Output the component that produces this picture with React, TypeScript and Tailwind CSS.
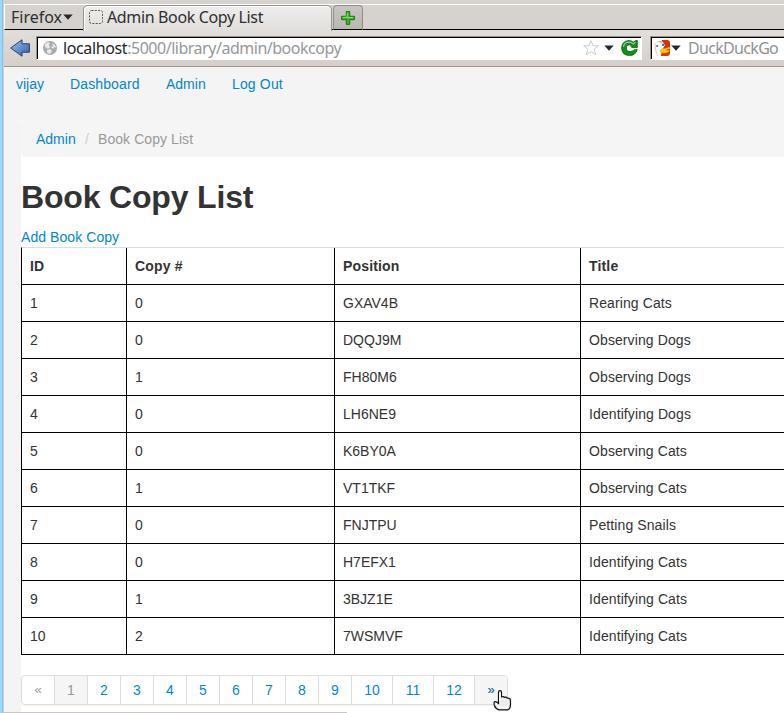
import React from "react";

const rows = [
  ["1", "0", "GXAV4B", "Rearing Cats"],
  ["2", "0", "DQQJ9M", "Observing Dogs"],
  ["3", "1", "FH80M6", "Observing Dogs"],
  ["4", "0", "LH6NE9", "Identifying Dogs"],
  ["5", "0", "K6BY0A", "Observing Cats"],
  ["6", "1", "VT1TKF", "Observing Cats"],
  ["7", "0", "FNJTPU", "Petting Snails"],
  ["8", "0", "H7EFX1", "Identifying Cats"],
  ["9", "1", "3BJZ1E", "Identifying Cats"],
  ["10", "2", "7WSMVF", "Identifying Cats"],
];

const pages = ["2", "3", "4", "5", "6", "7", "8", "9", "10", "11", "12"];

function Caret() {
  return (
    <svg width="10" height="6" viewBox="0 0 10 6" className="block shrink-0">
      <path d="M0.3 0.5h9.4L5 5.7z" fill="#2b2728" />
    </svg>
  );
}

function TabStrip() {
  return (
    <div className="flex h-[26px] border-t border-white bg-[#d6d2ce] text-[16px] leading-[20px] text-[#2f2f2f]">
      <button className="flex h-[25px] w-[79px] items-center border-b border-l border-b-black border-l-white bg-[#d6d2ce] pl-[5px]">
        <span className="w-[53px] whitespace-nowrap">Firefox</span>
        <Caret />
      </button>
      <div className="flex h-[26px] w-[249px] items-center rounded-t-[5px] border border-b-0 border-[#98938f] bg-gradient-to-b from-[#efeeed] to-[#e1dedb] pb-[3px] pl-[5px] shadow-[inset_1px_1px_0_#fff]">
        <svg width="14" height="14" viewBox="0 0 14 14" className="shrink-0">
          <rect x="0.5" y="0.5" width="13" height="13" rx="2" fill="none" stroke="#555" strokeDasharray="2 1.3" />
        </svg>
        <span className="ml-1 whitespace-nowrap pb-px tracking-[-0.36px]">Admin Book Copy List</span>
      </div>
      <div className="h-[25px] w-px border-b border-black" />
      <button className="flex h-[25px] w-[30px] items-center justify-center rounded-t-[4px] border border-b-black border-[#918c88] bg-gradient-to-b from-[#c9c5c2] to-[#bab6b2]">
        <svg width="14" height="14" viewBox="0 0 14 14">
          <path d="M5.3 .6h3.4V5.3h4.7v3.4H8.7v4.7H5.3V8.7H.6V5.3h4.7z" fill="#40b51f" stroke="#15780a" strokeLinejoin="round" />
          <path d="M6.3 2v4.3H2M7 6.5h5" fill="none" stroke="#8be66b" />
        </svg>
      </button>
      <div className="h-[25px] flex-1 border-b border-black" />
    </div>
  );
}

function Toolbar() {
  return (
    <div className="flex h-[37px] items-center border-b border-[#a29290] bg-gradient-to-b from-[#e1dedb] to-[#d4cfcb] pl-[6px] text-[16px]">
      <svg width="20" height="18" viewBox="0 0 20 18" className="mr-[6px] shrink-0">
        <defs>
          <linearGradient id="arrow" x1="0" y1="0" x2="1" y2="1">
            <stop offset="0" stopColor="#a4c5f0" />
            <stop offset="1" stopColor="#2b5da9" />
          </linearGradient>
        </defs>
        <path d="M.7 9L12 .8v4h7.4v8.4H12v4z" fill="url(#arrow)" stroke="#263f6c" strokeLinejoin="round" />
      </svg>
      <div className="flex h-[24px] w-[606px] shrink-0 items-center border border-b-white border-l-[#98918d] border-r-white border-t-[#98918d] bg-white pl-[6px] pr-[3px] shadow-[inset_1px_1px_0_#000]">
        <svg width="14" height="14" viewBox="0 0 14 14" className="shrink-0">
          <circle cx="7" cy="7" r="7" fill="#aaa" />
          <path d="M2 3l3-2 2 1-1 2 1 2-2 2-3-2zM9 2l3 2 1 3-2-1-1 2-2-2 2-1zM4 9l3-1 2 2-2 3-3-1z" fill="#e7e7e7" />
        </svg>
        <span className="ml-[6px] whitespace-nowrap tracking-[-0.48px] text-[#979797]">
          <span className="text-[#252525] tracking-[-0.38px]">localhost</span>:5000/library/admin/bookcopy
        </span>
        <div className="ml-auto flex items-center">
          <svg width="16" height="16" viewBox="0 0 16 16">
            <path d="M8 .8l2.1 5h5.2l-4.1 3.4 1.5 5.4L8 11.6l-4.7 3 1.5-5.4L.7 5.8h5.2z" fill="#fff" stroke="#ccc" strokeLinejoin="round" />
          </svg>
          <span className="ml-[5px] mr-[7px]"><Caret /></span>
          <svg width="17" height="16" viewBox="0 0 17 16">
            <path d="M12.2 2.3L14.6.6h1.7v7H8.8V6.4l1.8-1.5Q5.4 4.2 5.4 8q.2 3.8 4.2 3.5 2.5-.2 3.5-2h3.2Q14.6 15.5 8.5 15.5.7 15.3.7 8 .8 1 7.8.5q2.7 0 4.4 1.8z" fill="#158e20" stroke="#07580c" strokeWidth=".8" strokeLinejoin="round" />
            <circle cx="8.4" cy="8.2" r="2.2" fill="#fff" />
            <path d="M8.5 8.3h7v1H9z" fill="#fff" />
            <path d="M2.4 7q.7-4.7 5.4-4.8 2.6 0 4.4 1.7l2.3-1.6" fill="none" stroke="#8fd491" strokeWidth="1.2" />
          </svg>
        </div>
      </div>
      <div className="ml-[8px] flex h-[24px] flex-1 items-center overflow-hidden border border-r-0 border-b-white border-l-[#98918d] border-t-[#98918d] bg-white pl-[3px] shadow-[inset_1px_1px_0_#000]">
        <svg width="17" height="16" viewBox="0 0 17 16" className="shrink-0">
          <path d="M8 0h5q3 0 3 3v10q0 3-3 3H7l-1-5z" fill="#dc3006" />
          <path d="M2 3q1-3 4-2l3 1 2 3-3 5-1 6H5z" fill="#fff" />
          <path d="M.8 3l1 8 2 5" fill="none" stroke="#f6ad96" strokeWidth=".8" />
          <path d="M3 1.5h4l1.5 1.5z" fill="#ef5127" />
          <circle cx="3.2" cy="6" r="1.1" fill="#2074bd" />
          <circle cx="9.2" cy="4.7" r="1.2" fill="#2074bd" />
          <path d="M6.5 10q2-2 4.5-1.5L16 7v1.5l-4 1.5 4 .5q-2 3-7 2.5-4-.5-2.5-3z" fill="#ffd200" stroke="#d38b00" strokeWidth=".4" />
        </svg>
        <span><Caret /></span>
        <span className="ml-[7px] whitespace-nowrap tracking-[-0.68px] text-[#929292]">DuckDuckGo</span>
      </div>
    </div>
  );
}

function Pagination() {
  return (
    <ul className="flex h-[30px] w-[487px] overflow-hidden rounded-[4px] border border-[#ddd] text-center leading-[28px] text-[#0088cc] shadow-[0_1px_2px_rgba(0,0,0,0.05)]">
      <li className="w-[33px] border-r border-[#ddd] text-[13px] text-[#999]">«</li>
      <li className="w-[33px] border-r border-[#ddd] bg-[#f5f5f5] text-[#999]">1</li>
      {pages.map((page) => (
        <li key={page} className={`${page.length > 1 ? "w-[41px]" : "w-[33px]"} shrink-0 border-r border-[#ddd]`}>{page}</li>
      ))}
      <li className="flex-1 bg-[#f5f5f5] text-[13px] text-[#005580]">»</li>
    </ul>
  );
}

export default function App() {
  return (
    <div className="relative flex h-[713px] w-[784px] overflow-hidden bg-[#d6d2ce]">
      <div className="w-[2px] bg-[#99d9ff]" />
      <div className="w-px bg-[#87bfe5]" />
      <div className="w-px bg-[#d3cfcc]" />
      <div className="flex min-w-0 flex-1 flex-col pt-[4px]">
        <header className="shrink-0 font-['Noto_Sans',sans-serif]">
          <TabStrip />
          <Toolbar />
        </header>
        <main className="flex-1 bg-[#f4f4f4] font-['Liberation_Sans',sans-serif] text-[14px] leading-[20px] text-[#333]">
          <nav className="flex h-[54px] pl-[12px] pt-[7px] text-[#0088cc]">
            <a className="w-[54px]">vijay</a>
            <a className="w-[96px] tracking-[0.13px]">Dashboard</a>
            <a className="w-[66px]">Admin</a>
            <a className="tracking-[0.15px]">Log Out</a>
          </nav>
          <div className="ml-[17px] h-[592px] bg-white">
            <div className="flex h-[36px] rounded-l-[4px] bg-[#f5f5f5] pl-[15px] pt-[8px]">
              <a className="w-[49px] text-[#0088cc]">Admin</a>
              <span className="w-[13px] text-[#ccc]">/</span>
              <span className="tracking-[0.07px] text-[#999]">Book Copy List</span>
            </div>
            <h1 className="mt-[20px] h-[40px] whitespace-nowrap text-[32px] font-bold leading-[40px] tracking-[-0.17px]">Book Copy List</h1>
            <a className="mt-[10px] block h-[20px] tracking-[0.07px] text-[#0088cc]">Add Book Copy</a>
            <table className="w-[800px] table-fixed border-separate border-spacing-0 border-l border-t border-l-black border-t-[#ddd] text-left">
              <colgroup>
                <col className="w-[105px]" />
                <col className="w-[208px]" />
                <col className="w-[246px]" />
                <col />
              </colgroup>
              <thead>
                <tr className="h-[37px]">
                  {["ID", "Copy #", "Position", "Title"].map((h) => (
                    <th key={h} className="border-b border-r border-black px-[8px] py-[8px] tracking-[0.16px]">{h}</th>
                  ))}
                </tr>
              </thead>
              <tbody>
                {rows.map((row) => (
                  <tr key={row[0]} className="h-[37px]">
                    {row.map((cell, i) => (
                      <td key={i} className="border-b border-r border-black px-[8px] py-[8px] last:tracking-[0.1px]">{cell}</td>
                    ))}
                  </tr>
                ))}
              </tbody>
            </table>
            <div className="mt-[20px]"><Pagination /></div>
          </div>
        </main>
      </div>
      <div className="absolute bottom-0 left-[4px] h-px w-[343px] bg-[#c9c6c4]" />
      <svg className="absolute left-[493px] top-[690px]" width="19" height="21" viewBox="0 0 19 21">
        <path d="M5.5 12V2.2Q5.5.7 7 .7t1.5 1.5V7q2-1 3 .3 2-.5 2.8.8 3-.4 3.2 2.5v4.2q0 4-2.5 5H6q-3.5-1-4.6-4.3-1-3.4.6-3.8 1.6-.3 3.5 2z" fill="#ececec" stroke="#111" strokeWidth="1.2" strokeLinejoin="round" />
        <path d="M7 3v8M3 13.5l3 4h7l2-2" fill="none" stroke="#fff" strokeWidth="1.4" />
      </svg>
    </div>
  );
}
